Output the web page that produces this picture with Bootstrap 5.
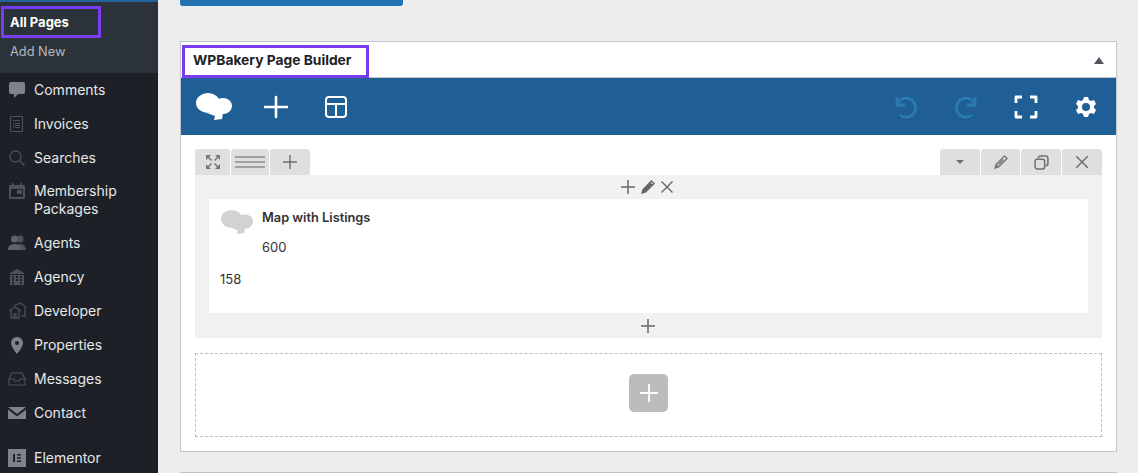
<!doctype html>
<html lang="en"><head><meta charset="utf-8"><title>WPBakery Page Builder</title>
<link rel="stylesheet" href="https://cdn.jsdelivr.net/npm/bootstrap@5.3.0/dist/css/bootstrap.min.css">
<style>
html,body{height:473px;overflow:hidden}
body{background:#ededed;font-family:Inter,"Liberation Sans",sans-serif;font-size:14px;color:#2c3338}
.shell{height:473px}
.side{width:158px;background:#1d2127;color:#e6e8e9;flex:none;overflow:hidden;height:473px}
.side-top{height:2px;background:#22639e}
.sub{background:#2c3239;height:71px;padding-top:4px}
.sub-on{width:100px;height:32px;margin-left:1px;border:3px solid #7a3cf0;color:#fff;font-weight:700;font-size:13px;padding-left:6px;line-height:27px}
.sub-add{font-size:12.8px;color:#b4b9be;padding:3px 0 0 10px;line-height:18px;margin-top:2px}
.mitem{height:34px;padding-left:8px;font-size:14px;line-height:18px;gap:8px}
.mitem.tall{height:51px;padding-top:7px}
.mitem.last{margin-top:11px}
.mico{width:18px;height:18px;flex:none;color:#7e8389;fill:currentColor}
.dim{color:#4d5258}
.main{width:937px;margin-left:22px;flex:none}
.pub{width:223px;height:6px;background:#2271b1;border-radius:0 0 3px 3px;margin-bottom:35px}
.bx{background:#fff;border:1px solid #c3c4c7;height:411px}
.bx-head{height:35px}
.bx-title{margin:3px 0 0 1px;width:187px;height:33px;border:3px solid #7a3cf0;font-weight:700;font-size:13.8px;line-height:25px;padding-left:8px;color:#1d2327;z-index:2}
.caret{width:0;height:0;border:5px solid transparent;border-top:0;border-bottom:7px solid #50575e;margin:1px 12px 0 0}
.vc-bar{height:58px;background:#1f5f96;border-top:1px solid #c3c4c7;padding:0 18px 0 15px}
.vc-bar svg{display:block}
.gap-cloud{margin-left:32px}
.gap-plus{margin-left:36px}
.vc-r{gap:36px}
.vc-body{padding:14px 14px 0 14px}
.tabs{height:26px}
.tab{height:26px;background:#dfdfdf;border-radius:3px 3px 0 0;margin-right:1px}
.tab.end{margin-right:0}
.w35{width:35px}.w38{width:38px}.w39{width:39px}.w40{width:40px}
.rowbx{background:#f1f1f1;height:163px}
.rowtools{height:24px;gap:6px;padding-right:3px}
.el{background:#fff;margin:0 14px;height:114px;padding:11px 11px 0 11px;font-size:13px;color:#333}
.el-cloud{flex:none}
.el-name{font-size:12.8px;font-weight:600;color:#333;line-height:16px}
.el-sub{margin-top:13px;line-height:16px;font-size:13px}
.el-foot{margin-top:16px;line-height:16px}
.rowadd{height:25px;padding-right:2px}
.drop{border:1px dashed #bdbdbd;height:84px;margin-top:15px}
.addbtn{width:39px;height:38px;background:#bcbcbc;border-radius:5px;margin-bottom:5px}
.next{border-top:1px solid #c3c4c7;margin-top:20px}
</style></head><body>
<div class="shell d-flex">
<nav class="side">
  <div class="side-top"></div>
  <div class="sub"><div class="sub-on">All Pages</div><div class="sub-add">Add New</div></div>
  <div class="mitem d-flex align-items-center"><svg class="mico" viewBox="0 0 18 18"><path d="M3 1h12a2 2 0 0 1 2 2v8a2 2 0 0 1-2 2h-5l-4 4v-4H3a2 2 0 0 1-2-2V3a2 2 0 0 1 2-2z"/></svg>Comments</div>
  <div class="mitem d-flex align-items-center"><svg class="mico dim" viewBox="0 0 18 18"><path fill="none" stroke="currentColor" d="M2.500 1.500h12v15h-12z"/><path d="M5 5h7v1H5zM5 8h1v1H5zM7 8h5v1H7zM5 10h1v1H5zM7 10h5v1H7zM5 12h1v1H5zM7 12h5v1H7z"/></svg>Invoices</div>
  <div class="mitem d-flex align-items-center"><svg class="mico dim" viewBox="0 0 18 18"><circle cx="7.500" cy="7.500" r="5.500" fill="none" stroke="currentColor" stroke-width="1.300"/><path d="M11.500 11.500l5 5" stroke="currentColor" stroke-width="1.500"/></svg>Searches</div>
  <div class="mitem tall d-flex align-items-start"><svg class="mico dim" viewBox="0 0 18 18"><path fill-rule="evenodd" d="M4 1h1.500v2h7V1H14v2h2a1 1 0 0 1 1 1v12a1 1 0 0 1-1 1H2a1 1 0 0 1-1-1V4a1 1 0 0 1 1-1h2zM3 7v8h12V7zm6 1h5v4H9z"/></svg><span>Membership<br>Packages</span></div>
  <div class="mitem d-flex align-items-center"><svg class="mico dim" viewBox="0 0 18 18"><circle cx="12" cy="5" r="3.500"/><path d="M7 16c0-4 2-6 5-6s6 2 6 6z"/><circle cx="6.500" cy="5" r="3.500" fill="#5f6369"/><path d="M0 16c0-4 3-6 6.500-6S13 12 13 16z" fill="#5f6369"/></svg>Agents</div>
  <div class="mitem d-flex align-items-center"><svg class="mico dim" viewBox="0 0 18 18"><path d="M9 1l7 4v1H2V5zM2 7h14v10H2z"/><path d="M4 8h2v2H4zM8 8h2v2H8zM12 8h2v2h-2zM4 11h2v2H4zM8 11h2v2H8zM12 11h2v2h-2zM4 14h2v2H4zM12 14h2v2h-2z" fill="#1d2127"/></svg>Agency</div>
  <div class="mitem d-flex align-items-center"><svg class="mico dim" viewBox="0 0 18 18"><path d="M1 9l6-4 6 4M3 8v8h8V8M6 16v-4h2v4M6 4l6-3 5 3v10h-3" fill="none" stroke="currentColor" stroke-width="1.300"/></svg>Developer</div>
  <div class="mitem d-flex align-items-center"><svg class="mico" viewBox="0 0 18 18"><path fill-rule="evenodd" d="M9 1a6 6 0 0 1 6 6c0 4-6 11-6 11S3 11 3 7a6 6 0 0 1 6-6zm0 4a2 2 0 1 0 0 4 2 2 0 0 0 0-4z"/></svg>Properties</div>
  <div class="mitem d-flex align-items-center"><svg class="mico dim" viewBox="0 0 18 18"><path fill="none" stroke="currentColor" stroke-width="1.100" d="M4 3h10l3 6v6H1V9zM1 9h5l1 2h4l1-2h5"/></svg>Messages</div>
  <div class="mitem d-flex align-items-center"><svg class="mico" viewBox="0 0 18 18"><path d="M0 3h18L9 10zM0 5.500l9 7 9-7V15H0z"/></svg>Contact</div>
  <div class="mitem last d-flex align-items-center"><svg class="mico" viewBox="0 0 18 18"><path fill-rule="evenodd" d="M0 0h18v18H0zM5 5v8h2V5zm4 0v1.500h4V5zm0 3.200v1.600h4V8.200zm0 3.300V13h4v-1.500z"/></svg>Elementor</div>
</nav>
<main class="main">
  <div class="pub"></div>
  <section class="bx">
    <div class="bx-head d-flex justify-content-between align-items-center">
      <div class="bx-title align-self-start position-relative">WPBakery Page Builder</div><div class="caret"></div>
    </div>
    <div class="vc-bar d-flex justify-content-between align-items-center">
      <div class="d-flex align-items-center">
        <svg width="36" height="28" viewBox="0 0 36 28" fill="#fff"><ellipse cx="12" cy="10" rx="12" ry="10"/><ellipse cx="27" cy="13" rx="9" ry="8"/><path d="M14 6h12v14H14zM11 20h16l-1 6-8 1 1-4z"/></svg>
        <svg class="gap-cloud" width="24" height="24" viewBox="0 0 24 24"><path d="M12 2v20M1 12h22" stroke="#fff" stroke-width="2.600" stroke-linecap="round"/></svg>
        <svg class="gap-plus" width="24" height="24" viewBox="0 0 24 24" fill="none" stroke="#fff" stroke-width="2"><rect x="2" y="2" width="20" height="20" rx="3"/><path d="M2 9h20M12 9v13"/></svg>
      </div>
      <div class="vc-r d-flex align-items-center">
        <svg width="24" height="24" viewBox="0 0 24 24" fill="none" stroke="#2a7cb0" stroke-width="2.800"><path d="M3 2v8h8"/><path d="M3 10a9.500 9.500 0 1 1 3 10"/></svg>
        <svg width="24" height="24" viewBox="0 0 24 24" fill="none" stroke="#2a7cb0" stroke-width="2.800"><path d="M21 2v8h-8"/><path d="M21 10a9.500 9.500 0 1 0-3 10"/></svg>
        <svg width="24" height="24" viewBox="0 0 24 24" fill="none" stroke="#fff" stroke-width="2.800" stroke-linejoin="round"><path d="M2 8V2h6M16 2h6v6M22 16v6h-6M8 22H2v-6"/></svg>
        <svg width="24" height="24" viewBox="0 0 24 24"><path fill="#fff" fill-rule="evenodd" d="M10 2h4l1 3 2 1 3-1 2 4-2 2v2l2 2-2 4-3-1-2 1-1 3h-4l-1-3-2-1-3 1-2-4 2-2v-2L2 9l2-4 3 1 2-1zm2 6a4 4 0 1 0 0 8 4 4 0 0 0 0-8z"/></svg>
      </div>
    </div>
    <div class="vc-body">
      <div class="tabs d-flex justify-content-between">
        <div class="d-flex">
          <div class="tab w35 d-flex align-items-center justify-content-center"><svg width="14" height="14" viewBox="0 0 14 14"><path fill="#777" d="M0 0h5L3.600 1.400 0 5zM14 0v5l-1.400-1.400L9 0zM0 14V9l1.400 1.400L5 14zM14 14H9l1.400-1.400L14 9z"/><path stroke="#777" stroke-width="1.500" d="M2 2l3.500 3.500M12 2L8.500 5.500M2 12l3.500-3.500M12 12L8.500 8.500"/></svg></div>
          <div class="tab w38 d-flex align-items-center justify-content-center"><svg width="30" height="12" viewBox="0 0 30 12" stroke="#8c8c8c" stroke-width="1.500"><path d="M0 1h30M0 6h30M0 11h30"/></svg></div>
          <div class="tab w40 d-flex align-items-center justify-content-center"><svg width="14" height="14" viewBox="0 0 14 14" stroke="#6f6f6f" stroke-width="1.400"><path d="M7 0v14M0 7h14"/></svg></div>
        </div>
        <div class="d-flex">
          <div class="tab w40 d-flex align-items-center justify-content-center"><svg width="8" height="5" viewBox="0 0 8 5"><path d="M0 0h8L4 4z" fill="#6f6f6f"/></svg></div>
          <div class="tab w39 d-flex align-items-center justify-content-center"><svg width="14" height="14" viewBox="0 0 14 14" fill="#777"><path d="M10.500 0L14 3.500 5 12.500 0 14l1.500-5zM10.500 2L3 9.500l1.500 1.500L12 3.500z" fill-rule="evenodd"/><path d="M9 4l1 1-5 5-1-1z"/></svg></div>
          <div class="tab w40 d-flex align-items-center justify-content-center"><svg width="15" height="15" viewBox="0 0 14 14" fill="none" stroke="#6f6f6f" stroke-width="1.400"><rect x="1" y="4" width="9" height="9" rx="2"/><path d="M4 3a2 2 0 0 1 2-2h5a2 2 0 0 1 2 2v5a2 2 0 0 1-2 2"/></svg></div>
          <div class="tab end w40 d-flex align-items-center justify-content-center"><svg width="12" height="12" viewBox="0 0 12 12" stroke="#6f6f6f" stroke-width="1.500"><path d="M0 0l12 12M12 0L0 12"/></svg></div>
        </div>
      </div>
      <div class="rowbx">
        <div class="rowtools d-flex justify-content-center align-items-center">
          <svg width="14" height="14" viewBox="0 0 14 14" stroke="#666" stroke-width="1.500"><path d="M7 0v14M0 7h14"/></svg>
          <svg width="14" height="14" viewBox="0 0 14 14" fill="#666"><path d="M10.500 0L14 3.500 5 12.500 0 14l1.500-5zM10.500 2L9.700 2.800 11.200 4.300 12 3.500z"/></svg>
          <svg width="12" height="12" viewBox="0 0 12 12" stroke="#666" stroke-width="1.400"><path d="M.5.500l11 11M11.500.500l-11 11"/></svg>
        </div>
        <div class="el">
          <div class="d-flex gap-2">
            <svg class="el-cloud" width="34" height="25" viewBox="0 0 36 28" fill="#d2d2d2"><ellipse cx="12" cy="10" rx="12" ry="10"/><ellipse cx="27" cy="13" rx="9" ry="8"/><path d="M14 6h12v14H14zM11 20h16l-1 6-8 1 1-4z"/></svg>
            <div><div class="el-name">Map with Listings</div><div class="el-sub">600</div></div>
          </div>
          <div class="el-foot">158</div>
        </div>
        <div class="rowadd d-flex justify-content-center align-items-center"><svg width="14" height="14" viewBox="0 0 14 14" stroke="#666" stroke-width="1.500"><path d="M7 0v14M0 7h14"/></svg></div>
      </div>
      <div class="drop d-flex justify-content-center align-items-center">
        <div class="addbtn d-flex justify-content-center align-items-center"><svg width="18" height="18" viewBox="0 0 18 18" stroke="#fff" stroke-width="1.800"><path d="M9 0v18M0 9h18"/></svg></div>
      </div>
    </div>
  </section>
  <div class="next"></div>
</main>
</div>
</body></html>
